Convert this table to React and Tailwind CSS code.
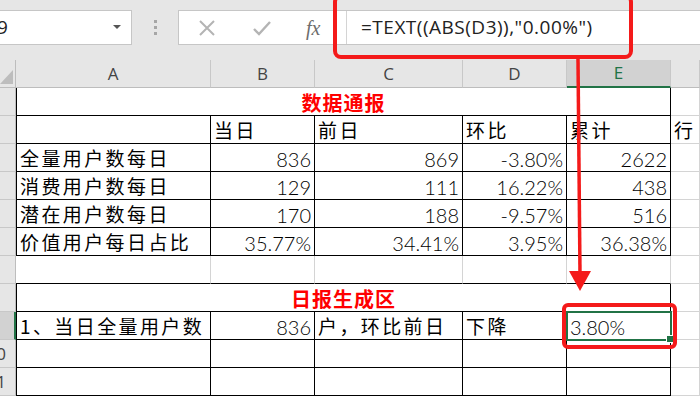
import React from 'react';

const GRID = 'grid grid-cols-[16px_195px_104px_148px_104px_104px_29px]';
const CJK = "font-['Noto_Sans_CJK_SC',sans-serif]";
const NUM = "font-['Lato','Noto_Sans_CJK_SC',sans-serif] font-light";

// single worksheet cell; borders are drawn on the right/bottom edge like Excel gridlines
function Cell({ children, className = '', align = 'left', num = false }) {
  return (
    <div
      className={`h-[28px] overflow-visible whitespace-nowrap flex items-center pt-[2px] text-black ${
        num ? `${NUM} text-[20px]` : `${CJK} text-[19px] tracking-[2.4px]`
      } ${align === 'right' ? 'justify-end pr-[3px]' : 'justify-start pl-[3px]'} ${className}`}
    >
      {children}
    </div>
  );
}

function RowHead({ label = '', active = false }) {
  return (
    <div
      className={`h-[28px] overflow-hidden flex items-center justify-end pr-[9px] font-['Open_Sans',sans-serif] text-[17px] text-[#444] border-b border-[#c8c8c8] ${
        active ? 'bg-[#d2d2d2] border-r-2 border-r-[#217346]' : 'bg-[#e6e6e6] border-r border-r-[#bdbdbd]'
      }`}
    >
      <span className="shrink-0">{label}</span>
    </div>
  );
}

const gray = 'border-r border-b border-[#d4d4d4]';
const box = 'border-r border-b border-black';
const boxL = 'border-l border-r border-b border-black';
const gapRow = 'border-r border-[#d4d4d4] border-b border-b-black';

const stats = [
  ['全量用户数每日', '836', '869', '-3.80%', '2622'],
  ['消费用户数每日', '129', '111', '16.22%', '438'],
  ['潜在用户数每日', '170', '188', '-9.57%', '516'],
  ['价值用户每日占比', '35.77%', '34.41%', '3.95%', '36.38%'],
];

function FormulaBar() {
  return (
    <div className="h-[60px] bg-[#e6e6e6] flex items-start pt-[10px]">
      {/* name box */}
      <div className="w-[132px] h-[35px] bg-white border-y border-r border-[#c6c6c6] flex items-center justify-between">
        <span className="ml-[-3px] font-['Open_Sans',sans-serif] text-[19px] text-[#222]">9</span>
        <svg width="8" height="5" className="mr-[10px]" viewBox="0 0 8 5">
          <polygon points="0,0 8,0 4,4" fill="#555" />
        </svg>
      </div>
      <div className="w-[46px] h-[35px] flex flex-col items-center justify-center gap-[3px]">
        <span className="w-[3px] h-[3px] bg-[#a6a6a6]" />
        <span className="w-[3px] h-[3px] bg-[#a6a6a6]" />
        <span className="w-[3px] h-[3px] bg-[#a6a6a6]" />
      </div>
      {/* formula box */}
      <div className="flex-1 h-[35px] bg-white border-y border-l border-[#c6c6c6] flex items-center">
        <div className="w-[168px] h-full flex items-center border-r border-[#d4d4d4]">
          <svg width="18" height="18" viewBox="0 0 18 18" className="ml-[19px]">
            <path d="M2 2 L16 16 M16 2 L2 16" stroke="#b4b4b4" strokeWidth="2" fill="none" />
          </svg>
          <svg width="20" height="18" viewBox="0 0 20 18" className="ml-[36px]">
            <path d="M2 10 L7 15 L18 3" stroke="#b4b4b4" strokeWidth="2.4" fill="none" />
          </svg>
          <span className="ml-[34px] font-['Liberation_Serif',serif] italic text-[20px] text-[#6d6d6d] leading-none">
            fx
          </span>
        </div>
        <span className="pl-[14px] font-['Open_Sans',sans-serif] text-[19px] tracking-[0.5px] text-[#222]">
          =TEXT((ABS(D3)),"0.00%")
        </span>
      </div>
    </div>
  );
}

function ColumnHeaders() {
  const letters = ['A', 'B', 'C', 'D', 'E', ''];
  return (
    <div className={`${GRID} h-[28px] bg-[#e6e6e6]`}>
      <div className="relative border-r border-b border-[#bdbdbd]">
        <svg width="13" height="14" className="absolute left-0 bottom-[3px]" viewBox="0 0 13 14">
          <polygon points="13,0 13,14 0,14" fill="#bdbdbd" />
        </svg>
      </div>
      {letters.map((l, i) =>
        l === 'E' ? (
          <div
            key={i}
            className="flex items-center justify-center bg-[#d2d2d2] border-r border-[#c8c8c8] border-b-2 border-b-[#217346] font-['Open_Sans',sans-serif] text-[17px] text-[#217346]"
          >
            {l}
          </div>
        ) : (
          <div
            key={i}
            className="flex items-center justify-center border-r border-[#c8c8c8] border-b border-b-[#bdbdbd] font-['Open_Sans',sans-serif] text-[17px] text-[#444]"
          >
            {l}
          </div>
        )
      )}
    </div>
  );
}

export default function App() {
  return (
    <div className="relative w-[700px] h-[396px] overflow-hidden bg-white">
      <FormulaBar />
      <ColumnHeaders />

      <div className={GRID}>
        {/* 数据通报 */}
        <RowHead />
        <div className={`col-span-5 h-[28px] flex items-center justify-center pt-[2px] ${CJK} font-bold text-[20px] tracking-[1px] text-[#f00] ${boxL}`}>
          数据通报
        </div>
        <Cell className={gray} />

        <RowHead />
        <Cell className={boxL} />
        <Cell className={box}>当日</Cell>
        <Cell className={box}>前日</Cell>
        <Cell className={box}>环比</Cell>
        <Cell className={box}>累计</Cell>
        <Cell className={gray}>行</Cell>

        {stats.map((r) => (
          <React.Fragment key={r[0]}>
            <RowHead />
            <Cell className={boxL}>{r[0]}</Cell>
            <Cell className={box} align="right" num>{r[1]}</Cell>
            <Cell className={box} align="right" num>{r[2]}</Cell>
            <Cell className={box} align="right" num>{r[3]}</Cell>
            <Cell className={box} align="right" num>{r[4]}</Cell>
            <Cell className={gray} />
          </React.Fragment>
        ))}

        <RowHead />
        <Cell className={gapRow} />
        <Cell className={gapRow} />
        <Cell className={gapRow} />
        <Cell className={gapRow} />
        <Cell className={gapRow} />
        <Cell className={gray} />

        {/* 日报生成区 */}
        <RowHead />
        <div className={`col-span-5 h-[28px] flex items-center justify-center pt-[2px] ${CJK} font-bold text-[20px] tracking-[1px] text-[#f00] ${boxL}`}>
          日报生成区
        </div>
        <Cell className={gray} />

        <RowHead active />
        <Cell className={boxL}>1、当日全量用户数</Cell>
        <Cell className={box} align="right" num>836</Cell>
        <Cell className={box}>户，环比前日</Cell>
        <Cell className={box}>下降</Cell>
        <Cell className={box} num>3.80%</Cell>
        <Cell className={gray} />

        {['10', '11'].map((n) => (
          <React.Fragment key={n}>
            <RowHead label={n} />
            <Cell className={boxL} />
            <Cell className={box} />
            <Cell className={box} />
            <Cell className={box} />
            <Cell className={box} />
            <Cell className={gray} />
          </React.Fragment>
        ))}
      </div>

      {/* active cell E9 */}
      <div className="absolute left-[566px] top-[311px] w-[106px] h-[30px] border-2 border-[#217346]" />
      <div className="absolute left-[667px] top-[336px] w-[6px] h-[6px] bg-[#217346] outline outline-1 outline-white" />

      {/* callouts */}
      <div className="absolute left-[333px] top-[-6px] w-[300px] h-[65px] border-4 border-[#f41a1a] rounded-lg" />
      <div className="absolute left-[562px] top-[303px] w-[115px] h-[46px] border-4 border-[#f41a1a] rounded-md" />
      <svg className="absolute left-0 top-0 pointer-events-none" width="700" height="396" viewBox="0 0 700 396">
        <line x1="578" y1="59" x2="580" y2="274" stroke="#f41a1a" strokeWidth="3.5" />
        <polygon points="569,271 591,271 580,291" fill="#f41a1a" />
      </svg>
    </div>
  );
}
